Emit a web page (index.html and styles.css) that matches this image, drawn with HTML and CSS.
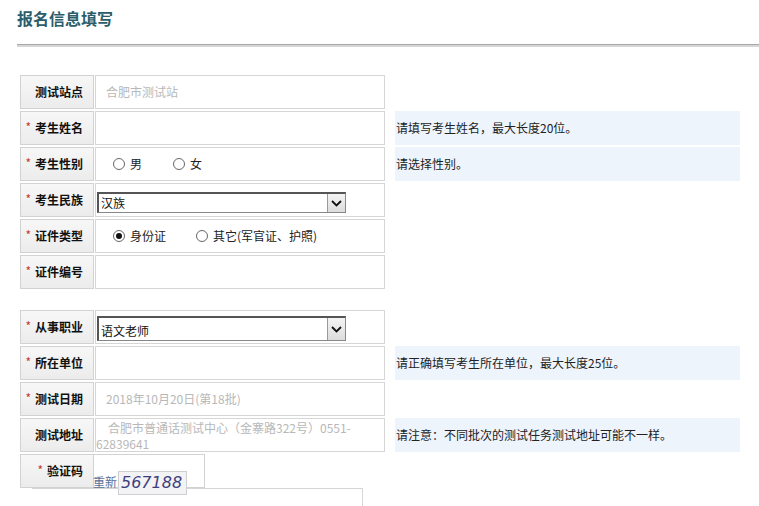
FILE: index.html
```html
<!DOCTYPE html>
<html lang="zh-CN">
<head>
<meta charset="utf-8">
<title>报名信息填写</title>
<link rel="stylesheet" href="styles.css">
</head>
<body>
<div class="page">
  <h1 class="title">报名信息填写</h1>
  <div class="rule"></div>
  <div class="form">
    <div class="row">
      <div class="label">测试站点</div>
      <div class="value muted">合肥市测试站</div>
    </div>
    <div class="row">
      <div class="label"><span class="req">*</span>考生姓名</div>
      <div class="value"></div>
      <div class="hint">请填写考生姓名，最大长度20位。</div>
    </div>
    <div class="row">
      <div class="label"><span class="req">*</span>考生性别</div>
      <div class="value radios">
        <span class="radio"></span><span class="rlabel">男</span>
        <span class="radio r2"></span><span class="rlabel">女</span>
      </div>
      <div class="hint">请选择性别。</div>
    </div>
    <div class="row">
      <div class="label"><span class="req">*</span>考生民族</div>
      <div class="value">
        <div class="select small"><span class="seltext">汉族</span><span class="arrow"><svg width="11" height="7" viewBox="0 0 11 7"><path d="M1 1 L5.5 5.5 L10 1" fill="none" stroke="#111" stroke-width="1.8"/></svg></span></div>
      </div>
    </div>
    <div class="row">
      <div class="label"><span class="req">*</span>证件类型</div>
      <div class="value radios">
        <span class="radio checked"></span><span class="rlabel">身份证</span>
        <span class="radio r3"></span><span class="rlabel">其它(军官证、护照)</span>
      </div>
    </div>
    <div class="row">
      <div class="label"><span class="req">*</span>证件编号</div>
      <div class="value"></div>
    </div>
    <div class="row spaced">
      <div class="label"><span class="req">*</span>从事职业</div>
      <div class="value">
        <div class="select big"><span class="seltext">语文老师</span><span class="arrow"><svg width="11" height="7" viewBox="0 0 11 7"><path d="M1 1 L5.5 5.5 L10 1" fill="none" stroke="#111" stroke-width="1.8"/></svg></span></div>
      </div>
    </div>
    <div class="row">
      <div class="label"><span class="req">*</span>所在单位</div>
      <div class="value"></div>
      <div class="hint">请正确填写考生所在单位，最大长度25位。</div>
    </div>
    <div class="row">
      <div class="label"><span class="req">*</span>测试日期</div>
      <div class="value muted">2018年10月20日(第18批)</div>
    </div>
    <div class="row">
      <div class="label">测试地址</div>
      <div class="value muted address">合肥市普通话测试中心（金寨路322号）0551-62839641</div>
      <div class="hint">请注意：不同批次的测试任务测试地址可能不一样。</div>
    </div>
    <div class="row captcha-row">
      <div class="label"><span class="req">*</span>验证码</div>
      <div class="cvalue">
        <span class="refresh">重新</span>
        <span class="captcha">567188</span>
      </div>
    </div>
    <div class="bottombox"></div>
  </div>
</div>
</body>
</html>
```

FILE: styles.css
```css
html, body {
  margin: 0;
  padding: 0;
  background: #fff;
}
body {
  font-family: "Noto Sans CJK SC", "Noto Sans", sans-serif;
  font-size: 12px;
  color: #222;
  width: 759px;
  height: 506px;
  overflow: hidden;
}
.page {
  padding-left: 17px;
}
.title {
  margin: 0;
  padding-top: 8px;
  font-size: 16px;
  line-height: 20px;
  font-weight: bold;
  color: #2b5d6d;
}
.rule {
  margin-top: 16px;
  height: 0;
  border-top: 1px solid #a8a8a8;
  border-bottom: 2px solid #d6d6d6;
}
.form {
  position: relative;
  margin-top: 28px;
  margin-left: 3px;
}
.row {
  display: flex;
  height: 34px;
  margin-bottom: 2px;
}
.row.spaced {
  margin-top: 21px;
}
.label {
  box-sizing: border-box;
  width: 74px;
  height: 34px;
  border: 1px solid #d2d2d2;
  background: linear-gradient(#f7f7f7, #ececec);
  font-weight: bold;
  font-size: 12px;
  line-height: 32px;
  text-align: right;
  padding-right: 10px;
  color: #111;
  position: relative;
}
.req {
  color: #c0392b;
  font-weight: normal;
  margin-right: 4px;
  position: relative;
  top: -1px;
}
.value {
  box-sizing: border-box;
  width: 290px;
  height: 34px;
  margin-left: 1px;
  border: 1px solid #d6d6d6;
  background: #fff;
  line-height: 32px;
  padding-left: 10px;
}
.value.muted {
  color: #b8b8b8;
}
.value.address {
  padding-left: 0;
  text-indent: 12px;
  line-height: 16px;
  padding-top: 1px;
  font-size: 12px;
}
.hint {
  box-sizing: border-box;
  width: 345px;
  height: 34px;
  margin-left: 10px;
  background: #eef4fb;
  line-height: 34px;
  padding-left: 1px;
  color: #222;
}
.radios {
  display: flex;
  align-items: center;
  padding-left: 17px;
}
.radio {
  box-sizing: border-box;
  width: 12px;
  height: 12px;
  border: 1px solid #666;
  border-radius: 50%;
  background: #fff;
  margin-right: 5px;
  display: inline-flex;
  align-items: center;
  justify-content: center;
}
.radio.checked::after {
  content: "";
  width: 6px;
  height: 6px;
  border-radius: 50%;
  background: #111;
}
.radio.r2 {
  margin-left: 31px;
}
.radio.r3 {
  margin-left: 30px;
}
.rlabel {
  color: #222;
}
.select {
  box-sizing: border-box;
  margin-left: -9px;
  width: 249px;
  display: flex;
  align-items: center;
  border: 1px solid #888;
  border-top: 2px solid #555;
  border-left: 2px solid #555;
  background: #fff;
}
.select.small {
  height: 21px;
  margin-top: 8px;
}
.select.big {
  height: 25px;
  margin-top: 5px;
}
.seltext {
  flex: 1;
  padding-left: 2px;
  line-height: 18px;
  color: #111;
}
.select.big .seltext {
  padding-top: 3px;
}
.arrow {
  box-sizing: border-box;
  width: 18px;
  height: 100%;
  border-left: 1px solid #999;
  background: linear-gradient(#f4f4f4, #dcdcdc);
  display: flex;
  align-items: center;
  justify-content: center;
}
.captcha-row {
  height: 34px;
}
.cvalue {
  box-sizing: border-box;
  width: 112px;
  height: 34px;
  margin-left: -1px;
  border: 1px solid #d2d2d2;
  border-left: none;
  position: relative;
}
.refresh {
  position: absolute;
  left: 0;
  top: 18px;
  font-size: 12px;
  line-height: 18px;
  color: #5a6f98;
  white-space: nowrap;
}
.captcha {
  position: absolute;
  left: 25px;
  top: 16px;
  width: 69px;
  height: 24px;
  box-sizing: border-box;
  border: 1px solid #cfcfcf;
  background: #f3f3f6;
  font-family: "DejaVu Sans", sans-serif;
  font-style: italic;
  font-size: 16px;
  line-height: 22px;
  color: #3d3f7e;
  padding-left: 2px;
}
.bottombox {
  margin-left: 12px;
  width: 330px;
  height: 30px;
  border-top: 1px solid #d6d6d6;
  border-right: 1px solid #d6d6d6;
  margin-top: -2px;
}
```
